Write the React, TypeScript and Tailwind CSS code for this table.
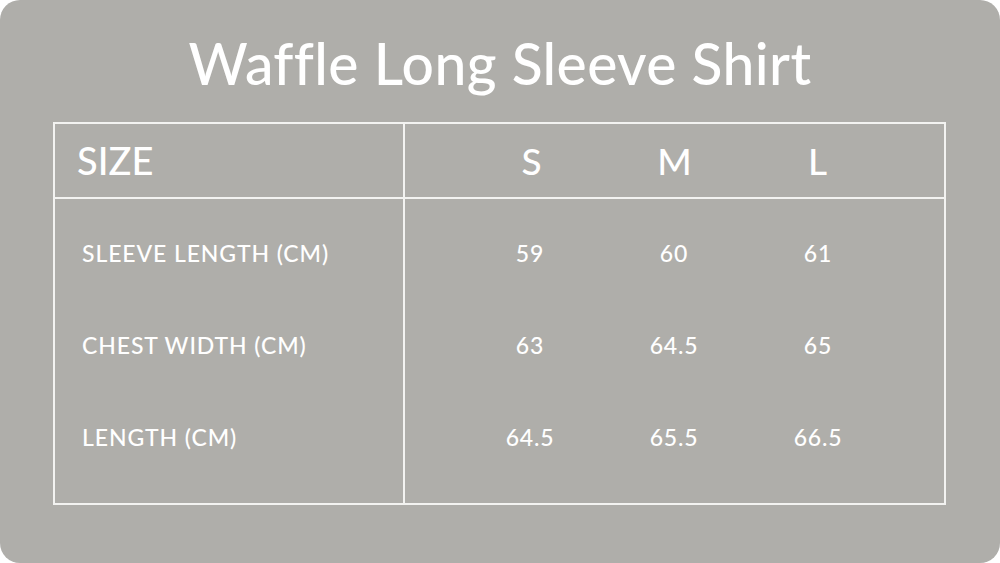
const sizes = ["S", "M", "L"]

const rows = [
    { label: "SLEEVE LENGTH (CM)", values: ["59", "60", "61"] },
    { label: "CHEST WIDTH (CM)", values: ["63", "64.5", "65"] },
    { label: "LENGTH (CM)", values: ["64.5", "65.5", "66.5"] },
]

export default function App() {
    return (
        <div className="w-[1000px] h-[563px] bg-white">
            <div
                className="w-full h-full bg-[#afaeaa] rounded-[20px] flex flex-col text-white"
                style={{ fontFamily: "Lato, 'Open Sans', sans-serif" }}
            >
                <h1 className="text-center text-[57px] font-medium leading-none tracking-[0.4px] pt-[35px] h-[122px]">
                    Waffle Long Sleeve Shirt
                </h1>
                <div className="ml-[53px] w-[893px] h-[383px] border-2 border-[#f3f3f1] flex flex-col">
                    {/* header */}
                    <div className="h-[75px] flex border-b-2 border-[#f3f3f1]">
                        <div className="w-[350px] border-r-2 border-[#f3f3f1] flex items-center pl-[22px] text-[38px] font-medium">
                            SIZE
                        </div>
                        <div className="flex-1 flex items-center pl-[55px]">
                            {sizes.map((s) => (
                                <div key={s} className="w-[143px] text-center text-[37px] font-medium">
                                    {s}
                                </div>
                            ))}
                        </div>
                    </div>
                    {/* body */}
                    <div className="flex-1 flex">
                        <div className="w-[350px] border-r-2 border-[#f3f3f1] pt-[8px]">
                            {rows.map((r) => (
                                <div key={r.label} className="h-[92px] flex items-center pl-[27px] text-[23px] font-medium tracking-[0.9px]">
                                    {r.label}
                                </div>
                            ))}
                        </div>
                        <div className="flex-1 pt-[8px] pl-[53px]">
                            {rows.map((r) => (
                                <div key={r.label} className="h-[92px] flex items-center">
                                    {r.values.map((v, i) => (
                                        <div key={i} className="w-[144px] text-center text-[23px] font-medium tracking-[0.8px]">
                                            {v}
                                        </div>
                                    ))}
                                </div>
                            ))}
                        </div>
                    </div>
                </div>
            </div>
        </div>
    )
}
